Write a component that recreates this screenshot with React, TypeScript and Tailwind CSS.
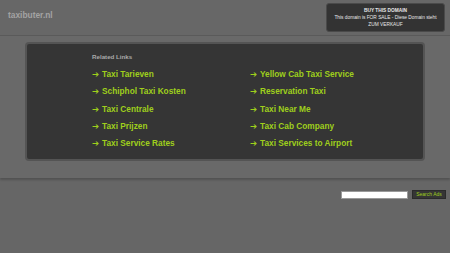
const left = ['Taxi Tarieven', 'Schiphol Taxi Kosten', 'Taxi Centrale', 'Taxi Prijzen', 'Taxi Service Rates'];
const right = ['Yellow Cab Taxi Service', 'Reservation Taxi', 'Taxi Near Me', 'Taxi Cab Company', 'Taxi Services to Airport'];

function LinkItem({ label }: { label: string }) {
  return (
    <a href="#" className="flex items-center leading-[17.25px] text-[#9fcf1c] font-bold text-[8.3px] no-underline">
      <span className="w-[10px] text-[8.5px] font-['DejaVu_Sans',sans-serif]">➔</span>
      <span>{label}</span>
    </a>
  );
}

export default function App() {
  return (
    <div className="w-[450px] h-[253px] overflow-hidden bg-[#666666] font-['Liberation_Sans',Arial,sans-serif]">
      <header className="flex h-[36px] items-start justify-between border-b border-[#5a5a5a] bg-[#676767] pl-[8px] pr-[5px]">
        <div className="mt-[10px] text-[8.4px] font-bold leading-[10px] text-[#a3a3a3]">taxibuter.nl</div>
        <div className="mt-[3px] flex h-[29px] w-[119px] flex-col items-center justify-center rounded-[3px] border border-[#4a4a4a] bg-[#333333] text-center text-[4.8px] leading-[7px] text-[#e8e8e8]">
          <div className="font-bold">BUY THIS DOMAIN</div>
          <div>This domain is FOR SALE - Diese Domain steht</div>
          <div>ZUM VERKAUF</div>
        </div>
      </header>

      <section className="h-[142px] bg-[#696969] px-[25px] pt-[6px] shadow-[0_2px_2px_rgba(0,0,0,0.2)]">
        <div className="h-[119px] rounded-[4px] border-2 border-[#545454] bg-[#353535] pl-[65px] pt-[9px]">
          <div className="text-[6.2px] font-bold leading-[8px] text-[#a9a9a9]">Related Links</div>
          <div className="mt-[5px] grid grid-cols-[158px_158px]">
            <div className="flex flex-col">
              {left.map((l) => (
                <LinkItem key={l} label={l} />
              ))}
            </div>
            <div className="flex flex-col">
              {right.map((l) => (
                <LinkItem key={l} label={l} />
              ))}
            </div>
          </div>
        </div>
      </section>

      <div className="mt-[12px] flex items-center justify-end gap-[4px] pr-[4px]">
        <input className="h-[8px] w-[67px] border border-[#999] bg-white outline-none" />
        <button className="h-[9px] w-[34px] border border-[#2a2a2a] bg-[#353535] text-[5px] leading-[7px] text-[#9fcf1c]">
          Search Ads
        </button>
      </div>
    </div>
  );
}
